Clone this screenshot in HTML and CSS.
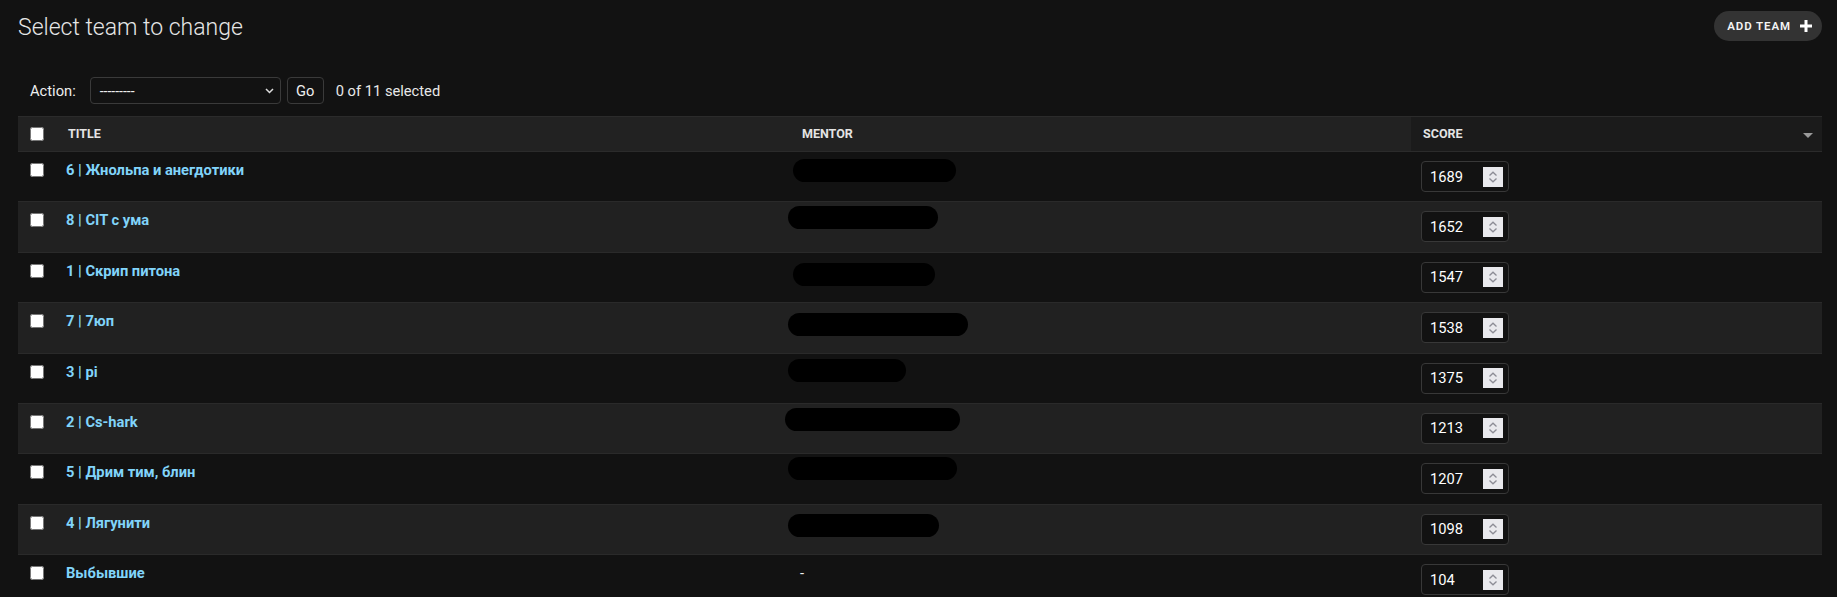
FILE: index.html
```html
<!DOCTYPE html>
<html lang="ru">
<head>
<meta charset="utf-8">
<title>Select team to change</title>
<link rel="stylesheet" href="styles.css">
</head>
<body>
<div class="content">
  <div class="top">
    <h1>Select team to change</h1>
    <a class="addlink" href="#">ADD TEAM
      <svg class="plus" width="12" height="12" viewBox="0 0 12 12"><rect x="4.5" y="0" width="3" height="12" fill="#fff"/><rect x="0" y="4.5" width="12" height="3" fill="#fff"/></svg>
    </a>
  </div>

  <div class="actions">
    <label class="action-label">Action:</label>
    <div class="select"><span>---------</span>
      <svg width="9" height="6" viewBox="0 0 9 6"><polyline points="1,1 4.5,4.5 8,1" fill="none" stroke="#dddddd" stroke-width="1.5"/></svg>
    </div>
    <button class="go">Go</button>
    <span class="counter">0 of 11 selected</span>
  </div>

  <table class="results">
    <colgroup>
      <col class="c-check"><col class="c-title"><col class="c-mentor"><col class="c-score">
    </colgroup>
    <thead>
      <tr>
        <th class="check"><input type="checkbox"></th>
        <th>Title</th>
        <th>Mentor</th>
        <th class="sorted">Score<svg class="sortarrow" width="10" height="5" viewBox="0 0 10 5"><polygon points="0,0 10,0 5,5" fill="#9a9a9a"/></svg></th>
      </tr>
    </thead>
    <tbody>
      <tr>
        <td class="check"><input type="checkbox"></td>
        <td><a href="#">6 | Жнольпа и анегдотики</a></td>
        <td class="redacted"><div class="blob" style="margin-top:7px;margin-left:-7px;width:163px"></div></td>
        <td class="score"><span class="numbox"><span>1689</span><svg class="spin" width="20" height="20" viewBox="0 0 20 20"><rect width="20" height="20" fill="#e9e9ed"/><polyline points="6.5,8.5 10,5.2 13.5,8.5" fill="none" stroke="#8d8d96" stroke-width="1.3"/><polyline points="6.5,11.5 10,14.8 13.5,11.5" fill="none" stroke="#8d8d96" stroke-width="1.3"/></svg></span></td>
      </tr>
      <tr>
        <td class="check"><input type="checkbox"></td>
        <td><a href="#">8 | CIT с ума</a></td>
        <td class="redacted"><div class="blob" style="margin-top:4px;margin-left:-12px;width:150px"></div></td>
        <td class="score"><span class="numbox"><span>1652</span><svg class="spin" width="20" height="20" viewBox="0 0 20 20"><rect width="20" height="20" fill="#e9e9ed"/><polyline points="6.5,8.5 10,5.2 13.5,8.5" fill="none" stroke="#8d8d96" stroke-width="1.3"/><polyline points="6.5,11.5 10,14.8 13.5,11.5" fill="none" stroke="#8d8d96" stroke-width="1.3"/></svg></span></td>
      </tr>
      <tr>
        <td class="check"><input type="checkbox"></td>
        <td><a href="#">1 | Скрип питона</a></td>
        <td class="redacted"><div class="blob" style="margin-top:10px;margin-left:-7px;width:142px"></div></td>
        <td class="score"><span class="numbox"><span>1547</span><svg class="spin" width="20" height="20" viewBox="0 0 20 20"><rect width="20" height="20" fill="#e9e9ed"/><polyline points="6.5,8.5 10,5.2 13.5,8.5" fill="none" stroke="#8d8d96" stroke-width="1.3"/><polyline points="6.5,11.5 10,14.8 13.5,11.5" fill="none" stroke="#8d8d96" stroke-width="1.3"/></svg></span></td>
      </tr>
      <tr>
        <td class="check"><input type="checkbox"></td>
        <td><a href="#">7 | 7юп</a></td>
        <td class="redacted"><div class="blob" style="margin-top:10px;margin-left:-12px;width:180px"></div></td>
        <td class="score"><span class="numbox"><span>1538</span><svg class="spin" width="20" height="20" viewBox="0 0 20 20"><rect width="20" height="20" fill="#e9e9ed"/><polyline points="6.5,8.5 10,5.2 13.5,8.5" fill="none" stroke="#8d8d96" stroke-width="1.3"/><polyline points="6.5,11.5 10,14.8 13.5,11.5" fill="none" stroke="#8d8d96" stroke-width="1.3"/></svg></span></td>
      </tr>
      <tr>
        <td class="check"><input type="checkbox"></td>
        <td><a href="#">3 | pi</a></td>
        <td class="redacted"><div class="blob" style="margin-top:5px;margin-left:-12px;width:118px"></div></td>
        <td class="score"><span class="numbox"><span>1375</span><svg class="spin" width="20" height="20" viewBox="0 0 20 20"><rect width="20" height="20" fill="#e9e9ed"/><polyline points="6.5,8.5 10,5.2 13.5,8.5" fill="none" stroke="#8d8d96" stroke-width="1.3"/><polyline points="6.5,11.5 10,14.8 13.5,11.5" fill="none" stroke="#8d8d96" stroke-width="1.3"/></svg></span></td>
      </tr>
      <tr>
        <td class="check"><input type="checkbox"></td>
        <td><a href="#">2 | Cs-hark</a></td>
        <td class="redacted"><div class="blob" style="margin-top:4px;margin-left:-15px;width:175px"></div></td>
        <td class="score"><span class="numbox"><span>1213</span><svg class="spin" width="20" height="20" viewBox="0 0 20 20"><rect width="20" height="20" fill="#e9e9ed"/><polyline points="6.5,8.5 10,5.2 13.5,8.5" fill="none" stroke="#8d8d96" stroke-width="1.3"/><polyline points="6.5,11.5 10,14.8 13.5,11.5" fill="none" stroke="#8d8d96" stroke-width="1.3"/></svg></span></td>
      </tr>
      <tr>
        <td class="check"><input type="checkbox"></td>
        <td><a href="#">5 | Дрим тим, блин</a></td>
        <td class="redacted"><div class="blob" style="margin-top:3px;margin-left:-12px;width:169px"></div></td>
        <td class="score"><span class="numbox"><span>1207</span><svg class="spin" width="20" height="20" viewBox="0 0 20 20"><rect width="20" height="20" fill="#e9e9ed"/><polyline points="6.5,8.5 10,5.2 13.5,8.5" fill="none" stroke="#8d8d96" stroke-width="1.3"/><polyline points="6.5,11.5 10,14.8 13.5,11.5" fill="none" stroke="#8d8d96" stroke-width="1.3"/></svg></span></td>
      </tr>
      <tr>
        <td class="check"><input type="checkbox"></td>
        <td><a href="#">4 | Лягунити</a></td>
        <td class="redacted"><div class="blob" style="margin-top:9px;margin-left:-12px;width:151px"></div></td>
        <td class="score"><span class="numbox"><span>1098</span><svg class="spin" width="20" height="20" viewBox="0 0 20 20"><rect width="20" height="20" fill="#e9e9ed"/><polyline points="6.5,8.5 10,5.2 13.5,8.5" fill="none" stroke="#8d8d96" stroke-width="1.3"/><polyline points="6.5,11.5 10,14.8 13.5,11.5" fill="none" stroke="#8d8d96" stroke-width="1.3"/></svg></span></td>
      </tr>
      <tr>
        <td class="check"><input type="checkbox"></td>
        <td><a href="#">Выбывшие</a></td>
        <td>-</td>
        <td class="score"><span class="numbox"><span>104</span><svg class="spin" width="20" height="20" viewBox="0 0 20 20"><rect width="20" height="20" fill="#e9e9ed"/><polyline points="6.5,8.5 10,5.2 13.5,8.5" fill="none" stroke="#8d8d96" stroke-width="1.3"/><polyline points="6.5,11.5 10,14.8 13.5,11.5" fill="none" stroke="#8d8d96" stroke-width="1.3"/></svg></span></td>
      </tr>
    </tbody>
  </table>
</div>
</body>
</html>
```

FILE: styles.css
```css
* { box-sizing: border-box; }

html, body {
  margin: 0;
  background: #121212;
}

body {
  font-family: Roboto, "Noto Sans", "Liberation Sans", sans-serif;
  color: #eeeeee;
  font-size: 14.7px;
}

.content {
  padding: 11px 15px 0 18px;
}

.top {
  display: flex;
  justify-content: space-between;
  align-items: flex-start;
}

h1 {
  margin: 0;
  padding-top: 2px;
  font-size: 23px;
  font-weight: 300;
  line-height: 30px;
  color: #e6e6e6;
}

.addlink {
  display: flex;
  align-items: center;
  gap: 9px;
  height: 30px;
  padding: 0 10px 0 13px;
  border-radius: 15px;
  background: #333333;
  color: #f4f4f4;
  text-decoration: none;
  font-size: 11.5px;
  font-weight: 600;
  letter-spacing: 0.9px;
}

.plus { display: block; }

.actions {
  display: flex;
  align-items: center;
  height: 27px;
  margin-top: 34px;
  padding-left: 12px;
}

.action-label {
  margin-right: 14px;
  color: #eeeeee;
}

.select {
  display: flex;
  align-items: center;
  justify-content: space-between;
  width: 191px;
  height: 27px;
  padding: 0 6px 0 9px;
  border: 1px solid #3a3a3a;
  border-radius: 4px;
  font-size: 14px;
  color: #eeeeee;
}

.select svg { display: block; }

.go {
  width: 37px;
  height: 27px;
  margin-left: 6px;
  padding: 0;
  border: 1px solid #3a3a3a;
  border-radius: 4px;
  background: #121212;
  color: #eeeeee;
  font-family: inherit;
  font-size: 14.7px;
}

.counter {
  margin-left: 12px;
  color: #e8e8e8;
}

.results {
  width: 100%;
  margin-top: 12px;
  border-collapse: separate;
  border-spacing: 0;
  table-layout: fixed;
}

.c-check { width: 38px; }
.c-title { width: 734px; }
.c-mentor { width: 621px; }
.c-score { width: 411px; }

.results th {
  padding: 0 12px;
  line-height: 34px;
  background: #222222;
  border-top: 1px solid #2b2b2b;
  border-bottom: 1px solid #2b2b2b;
  text-align: left;
  font-size: 12.5px;
  font-weight: 700;
  text-transform: uppercase;
  color: #e4e4e4;
  vertical-align: middle;
}

.results th.sorted {
  background: #1b1b1b;
  padding-right: 9px;
}

.sortarrow {
  float: right;
  margin-top: 16px;
  display: block;
}

.results input[type="checkbox"] {
  width: 14px;
  height: 14px;
}

.results th.check input {
  display: block;
  margin: 0;
}

.results td {
  padding: 9px 10px 9.4px;
  border-bottom: 1px solid #2a2a2a;
  vertical-align: top;
  font-size: 14.7px;
  line-height: 18px;
}

.results tbody tr:nth-child(even) td {
  background: #212121;
}

.results td.check {
  padding-left: 12px;
  padding-right: 0;
}

.results td.check input {
  display: block;
  margin: 2px 0 0 0;
}

.results td.redacted {
  padding-top: 0;
}

.blob {
  height: 23px;
  background: #000000;
  border-radius: 12px;
}

.results a {
  color: #81d4fa;
  font-weight: 700;
  text-decoration: none;
}

.numbox {
  display: flex;
  align-items: center;
  justify-content: space-between;
  width: 88px;
  height: 31px;
  padding: 0 5px 0 8px;
  border: 1px solid #383838;
  border-radius: 4px;
  background: #121212;
  color: #ffffff;
  font-size: 14.7px;
}

.spin { display: block; }
```
